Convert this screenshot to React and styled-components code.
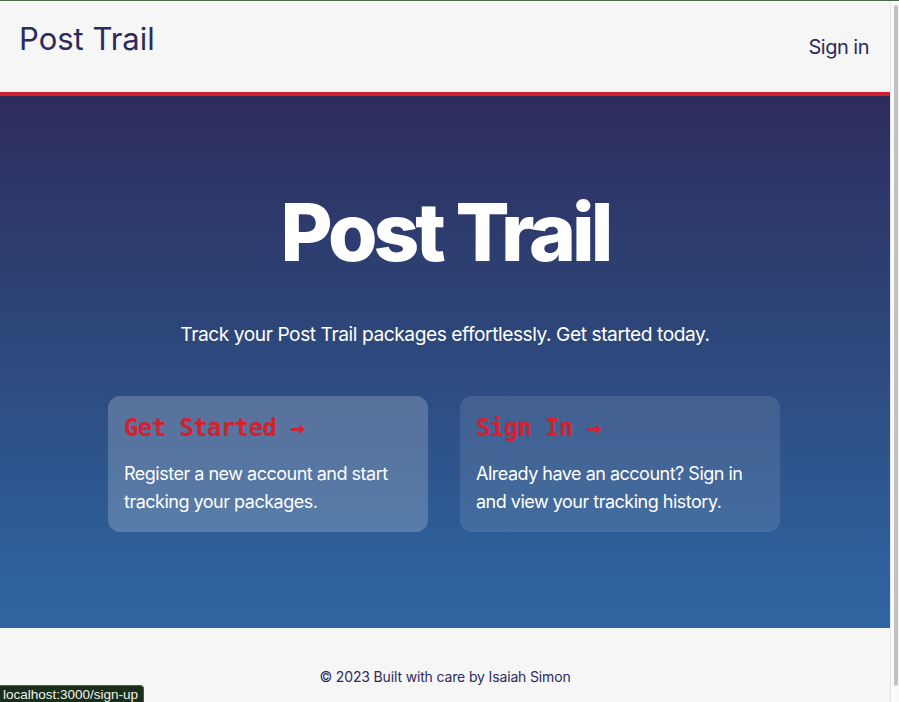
import React from "react";
import styled, { createGlobalStyle } from "styled-components";

const GlobalStyle = createGlobalStyle`
  html, body {
    margin: 0;
    padding: 0;
    height: 100%;
    overflow: hidden;
    background: #f6f6f7;
  }

  body {
    font-family: Inter, "Noto Sans", "Liberation Sans", sans-serif;
    -webkit-font-smoothing: antialiased;
  }

  * {
    box-sizing: border-box;
  }
`;

const Frame = styled.div`
  position: relative;
  display: flex;
  flex-direction: row;
  width: 100%;
  height: 702px;
  border-top: 1px solid #4c6b4e;
  overflow: hidden;
`;

const Page = styled.div`
  flex: 1;
  display: flex;
  flex-direction: column;
  min-width: 0;
`;

const Header = styled.header`
  height: 95px;
  flex-shrink: 0;
  display: flex;
  flex-direction: row;
  align-items: flex-start;
  justify-content: space-between;
  padding: 20px 21px 0 19px;
  background: #f6f6f7;
  border-bottom: 4px solid #d21f2f;
  color: #2d2b5b;
`;

const Brand = styled.div`
  font-size: 31px;
  line-height: 36px;
  font-weight: 400;
`;

const NavLink = styled.a`
  margin-top: 12px;
  font-size: 20px;
  line-height: 28px;
  letter-spacing: -0.5px;
  color: #2d2b5b;
  text-decoration: none;
  cursor: pointer;
`;

const Hero = styled.main`
  height: 532px;
  flex-shrink: 0;
  display: flex;
  flex-direction: column;
  align-items: center;
  justify-content: center;
  gap: 48px;
  background: linear-gradient(to bottom, #2e2c5c 0%, #2d4a7e 50%, #2f66a3 100%);
  color: #ffffff;
`;

const HeroTitle = styled.h1`
  margin: 0;
  font-size: 80px;
  line-height: 80px;
  font-weight: 800;
  letter-spacing: -4px;
`;

const Lead = styled.p`
  margin: 0;
  font-size: 19.2px;
  line-height: 28px;
  letter-spacing: -0.45px;
`;

const Cards = styled.div`
  display: grid;
  grid-template-columns: 320px 320px;
  gap: 32px;
  margin-left: -2px;
`;

const Card = styled.a`
  display: flex;
  flex-direction: column;
  gap: 16px;
  padding: 16px;
  border-radius: 12px;
  background: ${(props) =>
    props.$active ? "rgba(255, 255, 255, 0.2)" : "rgba(255, 255, 255, 0.1)"};
  color: #ffffff;
  text-decoration: none;
  cursor: pointer;
`;

const CardTitle = styled.h3`
  margin: 0;
  font-family: "DejaVu Sans Mono", "Liberation Mono", monospace;
  font-size: 24px;
  line-height: 32px;
  font-weight: 700;
  color: #d3222f;
  letter-spacing: -0.6px;
`;

const CardText = styled.div`
  font-size: 18px;
  line-height: 28px;
  letter-spacing: -0.5px;
`;

const Footer = styled.footer`
  flex: 1;
  padding-top: 39px;
  text-align: center;
  font-size: 14px;
  line-height: 20px;
  letter-spacing: -0.15px;
  color: #2d2b5b;
  background: #f6f6f7;
`;

const ScrollTrack = styled.div`
  width: 9px;
  flex-shrink: 0;
  padding: 4px 1px 16px 3px;
  background: #fafafa;
  border-left: 1px solid #e4e4e4;
`;

const ScrollThumb = styled.div`
  height: 100%;
  border-radius: 3px;
  background: #c2c2c2;
`;

const StatusBubble = styled.div`
  position: absolute;
  left: 0;
  bottom: 0;
  height: 17px;
  padding: 0 5px 0 3px;
  font-family: "Liberation Sans", Arial, sans-serif;
  font-size: 13.5px;
  line-height: 17px;
  color: #eef2ee;
  background: #1b2e1c;
  border: 1px solid #4a5a4a;
  border-left: none;
  border-bottom: none;
  border-top-right-radius: 4px;
`;

const cards = [
  {
    title: "Get Started →",
    text: "Register a new account and start tracking your packages.",
    href: "/sign-up",
    active: true,
  },
  {
    title: "Sign In →",
    text: "Already have an account? Sign in and view your tracking history.",
    href: "/sign-in",
    active: false,
  },
];

const App = () => {
  return (
    <>
      <GlobalStyle />
      <Frame>
        <Page>
          <Header>
            <Brand>Post Trail</Brand>
            <NavLink>Sign in</NavLink>
          </Header>
          <Hero>
            <HeroTitle>Post Trail</HeroTitle>
            <Lead>Track your Post Trail packages effortlessly. Get started today.</Lead>
            <Cards>
              {cards.map((card) => (
                <Card key={card.href} $active={card.active}>
                  <CardTitle>{card.title}</CardTitle>
                  <CardText>{card.text}</CardText>
                </Card>
              ))}
            </Cards>
          </Hero>
          <Footer>© 2023 Built with care by Isaiah Simon</Footer>
        </Page>
        <ScrollTrack>
          <ScrollThumb />
        </ScrollTrack>
        <StatusBubble>localhost:3000/sign-up</StatusBubble>
      </Frame>
    </>
  );
};

export default App;
